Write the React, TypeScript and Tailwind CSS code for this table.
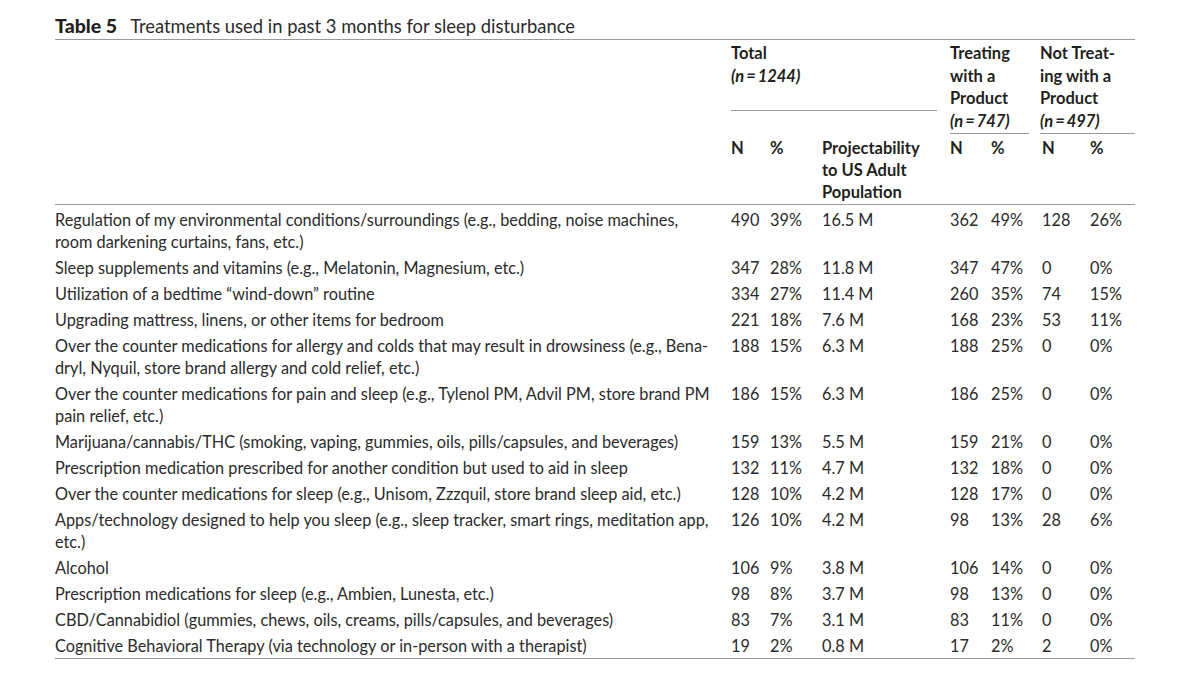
import React from 'react';

const cols = 'grid grid-cols-[676px_39px_52px_128px_41px_49px_50px_45px]';

const rows: { label: string[]; v: string[] }[] = [
  {
    label: [
      'Regulation of my environmental conditions/surroundings (e.g., bedding, noise machines,',
      'room darkening curtains, fans, etc.)',
    ],
    v: ['490', '39%', '16.5 M', '362', '49%', '128', '26%'],
  },
  { label: ['Sleep supplements and vitamins (e.g., Melatonin, Magnesium, etc.)'], v: ['347', '28%', '11.8 M', '347', '47%', '0', '0%'] },
  { label: ['Utilization of a bedtime \u201cwind-down\u201d routine'], v: ['334', '27%', '11.4 M', '260', '35%', '74', '15%'] },
  { label: ['Upgrading mattress, linens, or other items for bedroom'], v: ['221', '18%', '7.6 M', '168', '23%', '53', '11%'] },
  {
    label: [
      'Over the counter medications for allergy and colds that may result in drowsiness (e.g., Bena-',
      'dryl, Nyquil, store brand allergy and cold relief, etc.)',
    ],
    v: ['188', '15%', '6.3 M', '188', '25%', '0', '0%'],
  },
  {
    label: [
      'Over the counter medications for pain and sleep (e.g., Tylenol PM, Advil PM, store brand PM',
      'pain relief, etc.)',
    ],
    v: ['186', '15%', '6.3 M', '186', '25%', '0', '0%'],
  },
  {
    label: ['Marijuana/cannabis/THC (smoking, vaping, gummies, oils, pills/capsules, and beverages)'],
    v: ['159', '13%', '5.5 M', '159', '21%', '0', '0%'],
  },
  {
    label: ['Prescription medication prescribed for another condition but used to aid in sleep'],
    v: ['132', '11%', '4.7 M', '132', '18%', '0', '0%'],
  },
  {
    label: ['Over the counter medications for sleep (e.g., Unisom, Zzzquil, store brand sleep aid, etc.)'],
    v: ['128', '10%', '4.2 M', '128', '17%', '0', '0%'],
  },
  {
    label: [
      'Apps/technology designed to help you sleep (e.g., sleep tracker, smart rings, meditation app,',
      'etc.)',
    ],
    v: ['126', '10%', '4.2 M', '98', '13%', '28', '6%'],
  },
  { label: ['Alcohol'], v: ['106', '9%', '3.8 M', '106', '14%', '0', '0%'] },
  { label: ['Prescription medications for sleep (e.g., Ambien, Lunesta, etc.)'], v: ['98', '8%', '3.7 M', '98', '13%', '0', '0%'] },
  {
    label: ['CBD/Cannabidiol (gummies, chews, oils, creams, pills/capsules, and beverages)'],
    v: ['83', '7%', '3.1 M', '83', '11%', '0', '0%'],
  },
  {
    label: ['Cognitive Behavioral Therapy (via technology or in-person with a therapist)'],
    v: ['19', '2%', '0.8 M', '17', '2%', '2', '0%'],
  },
];

export default function App() {
  return (
    <div className="w-[1200px] h-[698px] bg-white text-[#231f20] font-['Lato',sans-serif]">
      <div className="ml-[55px] w-[1080px]">
        {/* caption */}
        <div className="pt-[14px] border-b border-[#9a9a9a] leading-[24px] whitespace-nowrap">
          <span className="font-black text-[19.5px]">Table 5</span>
          <span className="ml-[13px] text-[18.4px] text-[#2b2b2b]">
            Treatments used in past 3 months for sleep disturbance
          </span>
        </div>

        {/* header */}
        <div className="text-[16.5px] font-bold leading-[22.5px]">
          <div className={`${cols} items-start`}>
            <div />
            <div className="col-span-3 mr-[13px] h-[71px] pt-[2px] border-b border-[#9a9a9a]">
              Total
              <br />
              <i>(n&thinsp;=&thinsp;1244)</i>
            </div>
            <div className="col-span-2 mr-[11px] h-[94px] pt-[2px] border-b border-[#9a9a9a]">
              Treating
              <br />
              with a
              <br />
              Product
              <br />
              <i>(n&thinsp;=&thinsp;747)</i>
            </div>
            <div className="col-span-2 h-[94px] pt-[2px] border-b border-[#9a9a9a]">
              Not Treat-
              <br />
              ing with a
              <br />
              Product
              <br />
              <i>(n&thinsp;=&thinsp;497)</i>
            </div>
          </div>
          <div className={`${cols} h-[71px] pt-[3px] leading-[22px] border-b border-[#9a9a9a]`}>
            <div />
            <div>N</div>
            <div>%</div>
            <div>
              Projectability
              <br />
              to US Adult
              <br />
              Population
            </div>
            <div>N</div>
            <div>%</div>
            <div className="pl-[2px]">N</div>
            <div>%</div>
          </div>
        </div>

        {/* body */}
        <div className="text-[16.3px] leading-[22px] text-[#2b2b2b] border-b border-[#9a9a9a] pb-[1px]">
          {rows.map((r, i) => (
            <div key={i} className={`${cols} pt-[4px]`}>
              <div className="whitespace-nowrap">
                {r.label.map((l, j) => (
                  <div key={j}>{l}</div>
                ))}
              </div>
              {r.v.map((v, j) => (
                <div key={j} className={j === 5 ? 'pl-[2px] whitespace-nowrap' : 'whitespace-nowrap'}>
                  {v}
                </div>
              ))}
            </div>
          ))}
        </div>
      </div>
    </div>
  );
}
